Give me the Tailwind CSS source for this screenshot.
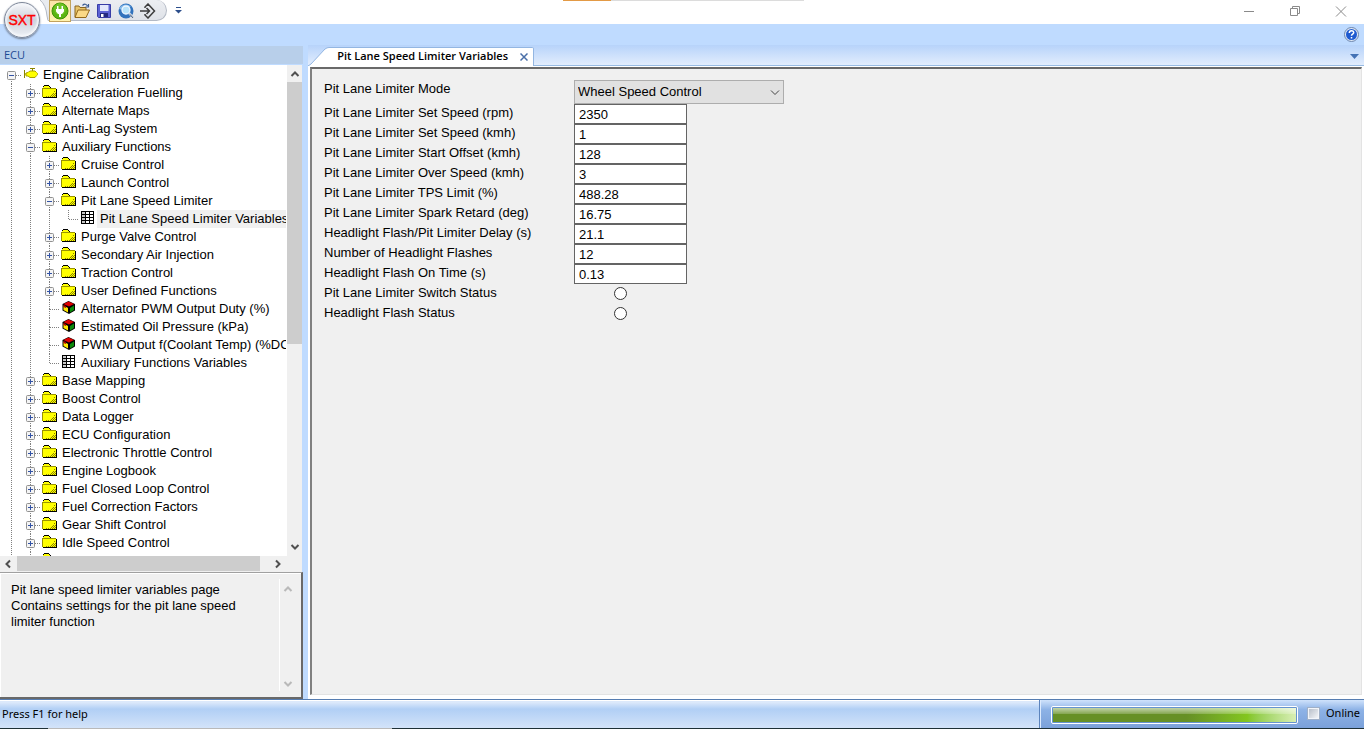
<!DOCTYPE html>
<html lang="en">
<head>
<meta charset="utf-8">
<title>SXT</title>
<script src="https://cdn.jsdelivr.net/npm/@tailwindcss/browser@4"></script>
</head>
<body class="h-screen overflow-hidden flex flex-col bg-[#bfdbff] text-black font-['Liberation_Sans',sans-serif] text-[13px]">

<!-- Shared symbols -->
<svg class="hidden" aria-hidden="true">
  <symbol id="folder" viewBox="0 0 16 14" shape-rendering="crispEdges">
    <path d="M2 0h5v1h1v1h1v1h5v1h1v9H1v-1H0V3h1V1h1z" fill="#000"/>
    <path d="M2 1h5v1h1v1H1V2h1z" fill="#ff0"/>
    <path d="M0 3h1v9H0zM1 3h13v1H1z" fill="#9a9400"/>
    <path d="M1 4h13v8H1z" fill="#ff0"/>
    <path d="M12 6h1v1h-1zM11 8h1v1h-1zM13 8h1v1h-1zM10 9h1v1h-1zM12 9h1v1h-1zM9 10h1v1H9zM11 10h1v1h-1zM13 10h1v1h-1zM4 11h1v1H4zM6 11h1v1H6zM8 11h1v1H8zM10 11h1v1h-1zM12 11h1v1h-1z" fill="#8a8500"/>
  </symbol>
  <symbol id="engine" viewBox="0 0 16 14">
    <path d="M1.500 3v8M2 7h3M7 1.500h5M9.500 2v2" stroke="#8a8500" fill="none"/>
    <path d="M5 5.500l2-1.500h5l2.500 2.500v1L12 10.500H7L5 9H3V6z" fill="#ff0" stroke="#a8a100"/>
    <path d="M5 7h9" stroke="#ff0" stroke-width="3"/>
  </symbol>
  <symbol id="table" viewBox="0 0 16 14" shape-rendering="crispEdges">
    <path d="M1 0h13v13H1z" fill="#000"/>
    <path d="M6 1h3v2H6zM10 1h3v2h-3zM6 4h3v2H6zM10 4h3v2h-3zM6 7h3v2H6zM10 7h3v2h-3zM6 10h3v2H6zM10 10h3v2h-3z" fill="#fff"/>
    <path d="M2 1h3v2H2zM2 4h3v2H2zM2 7h3v2H2zM2 10h3v2H2z" fill="#c8c8c8"/>
  </symbol>
  <symbol id="cube" viewBox="0 0 16 14">
    <path d="M7.500 0L14 3v6.500L8 13 1.500 9.500V3z" fill="#000"/>
    <path d="M7.500.500L13 3 8 5.500 2.500 3z" fill="#e00000"/>
    <path d="M2.500 4.500L7 7v4.500L2.500 9z" fill="#ffe800"/>
    <path d="M13 4.500L9 7v4.500L13 9z" fill="#0a8a0a"/>
    <path d="M2.500 4L5 5v2L2.500 6z" fill="#b00000"/>
  </symbol>
  <symbol id="chev-u" viewBox="0 0 10 10"><path d="M1.500 7L5 3.500 8.500 7" fill="none" stroke="currentColor" stroke-width="2"/></symbol>
  <symbol id="chev-d" viewBox="0 0 10 10"><path d="M1.500 3L5 6.500 8.500 3" fill="none" stroke="currentColor" stroke-width="2"/></symbol>
  <symbol id="chev-l" viewBox="0 0 10 10"><path d="M7 1.500L3.500 5 7 8.500" fill="none" stroke="currentColor" stroke-width="2"/></symbol>
  <symbol id="chev-r" viewBox="0 0 10 10"><path d="M3 1.500L6.500 5 3 8.500" fill="none" stroke="currentColor" stroke-width="2"/></symbol>
</svg>

<!-- Title bar -->
<header class="relative h-6 shrink-0 bg-white flex items-start">
  <button aria-label="SXT menu" class="absolute z-10 left-1 top-0.5 size-9 rounded-full border border-[#7d8799] bg-linear-to-b from-[#f6f7fa] via-[#ccd2dc] to-[#eef1f6] shadow-[0_1px_2px_#6b7688,inset_0_0_2px_2px_#f4f6fa] text-[#f00] text-sm leading-none [-webkit-text-stroke:0.4px_#f00]">SXT</button>
  <svg class="ml-10 w-2 h-[21px] shrink-0" viewBox="0 0 8 21"><path d="M0 0Q6 5 7 16L8 20.500V0z" fill="#e8ebf0"/><path d="M0 0Q6 5 7 16L8 20.500" fill="none" stroke="#b3b9c4"/></svg>
  <div class="h-[21px] w-[119px] rounded-r-full border border-l-0 border-t-0 border-[#b3b9c4] bg-linear-to-b from-[#eceef2] to-[#dfe2e8] flex items-start pl-px">
    <button aria-label="Connect" class="size-[22px] -mb-px shrink-0 flex items-center justify-center border border-[#c2a25c] bg-linear-to-b from-[#fbe3a8] to-[#fff3b0]">
      <svg class="size-[18px]" viewBox="0 0 18 18"><circle cx="9" cy="9" r="8" fill="#5bb512" stroke="#3f9207"/><circle cx="9" cy="7" r="6" fill="#7fd036" opacity=".5"/><path d="M6 4h1.500v3h3V4H12v3h1v2.500L11 12h-1v3H8v-3H7L5 9.500V7h1z" fill="#fff"/></svg>
    </button>
    <button aria-label="Open" class="w-[22px] h-[22px] shrink-0 flex items-center justify-center">
      <svg class="size-4" viewBox="0 0 16 16"><path d="M1 14V3h4l1 1.500h6V7" fill="#e8c468" stroke="#8a6520"/><path d="M1 14.500L4 7h11.500L12 14.500z" fill="#fbd987" stroke="#94691c"/><path d="M8.500 2.500c2-2 4-1.500 5 .5M14.500 1v3h-3" fill="none" stroke="#3b5b93" stroke-width="1.200"/></svg>
    </button>
    <button aria-label="Save" class="w-[22px] h-[22px] shrink-0 flex items-center justify-center">
      <svg class="size-4" viewBox="0 0 16 16"><path d="M1.500 1.500h13v13h-12l-1-1z" fill="#5c62d4" stroke="#383da6"/><path d="M4 2h8.500v6H4z" fill="#e3e8fb"/><path d="M4 10h8v4H4z" fill="#242a80"/><path d="M5 11h2.500v3H5z" fill="#fff"/></svg>
    </button>
    <button aria-label="Find" class="w-[22px] h-[22px] shrink-0 flex items-center justify-center">
      <svg class="size-4" viewBox="0 0 16 16"><circle cx="8" cy="8" r="7.500" fill="#3172bd"/><path d="M1 6c2-5 9-6 12-2-4 0-4 3-8 3z" fill="#83b9e8"/><circle cx="8" cy="7" r="4" fill="#b7e2fa" stroke="#eef6ff" stroke-width="1.300"/><path d="M11 10l4 4.500" stroke="#c9d4e2" stroke-width="2.500"/><path d="M12 11.500l3 3.500" stroke="#51637c"/></svg>
    </button>
    <button aria-label="Go online" class="w-[22px] h-[22px] shrink-0 flex items-center justify-center">
      <svg class="size-4" viewBox="0 0 16 16"><path d="M5 5V4l3-3 6.500 7L8 15l-3-3v-1M0 8h9M6.500 5l3 3-3 3" fill="none" stroke="#3c3c3c" stroke-width="1.500"/></svg>
    </button>
  </div>
  <button aria-label="Customize toolbar" class="ml-2 mt-1.5 size-2">
    <svg class="size-2" viewBox="0 0 8 8"><path d="M1 1.500h5" stroke="#2d4f8c"/><path d="M0 4h7L3.500 7.500z" fill="#2d4f8c"/></svg>
  </button>
  <div class="absolute left-[563px] top-0 flex h-px w-[241px]"><div class="w-12 bg-[#e39a45]"></div><div class="grow bg-[#dcdcdc]"></div></div>
  <div class="ml-auto h-6 flex items-center text-[#8a8a8a]">
    <button aria-label="Minimize" class="w-[46px] h-6 flex justify-center items-center"><svg class="size-3" viewBox="0 0 12 12"><path d="M1 5.500h10" stroke="currentColor"/></svg></button>
    <button aria-label="Restore" class="w-[46px] h-6 flex justify-center items-center"><svg class="size-3" viewBox="0 0 12 12"><path d="M1.500 2.500h7v7h-7zM3.500 2V.500h7v7H9" fill="none" stroke="currentColor"/></svg></button>
    <button aria-label="Close" class="w-[46px] h-6 flex justify-center items-center"><svg class="size-3" viewBox="0 0 12 12"><path d="M1 .500l10 10M11 .500L1 10.500" stroke="currentColor"/></svg></button>
  </div>
</header>

<!-- Ribbon strip -->
<div class="h-[21px] shrink-0 flex justify-end items-center pr-[5px]">
  <button aria-label="Help"><svg class="size-[15px]" viewBox="0 0 15 15"><circle cx="7.500" cy="7.500" r="7" fill="#dfe9f7" stroke="#6e86ad"/><circle cx="7.500" cy="7.500" r="5.500" fill="#1f5ad0"/><path d="M5.300 6c0-3 4.400-3 4.400-.4 0 1.600-2.200 1.600-2.200 3.100M7.500 10v1.600" fill="none" stroke="#fff" stroke-width="1.500"/></svg></button>
</div>

<!-- Workspace -->
<div class="grow min-h-0 flex">
  <aside class="w-[303px] shrink-0 flex flex-col pt-px">
    <h2 class="h-[18px] shrink-0 bg-[#b8cfea] pl-1 font-['Open_Sans',sans-serif] text-[11px] leading-[18px] text-[#1c4a94]">ECU</h2>
    <div class="grow min-h-0 mr-px mt-px flex flex-col bg-white">
      <div class="grow min-h-0 flex">
        <ul id="tree" role="tree" aria-label="ECU" class="grow min-w-0 overflow-hidden pl-0.5 pt-px mr-px"></ul>
        <div class="w-[15px] shrink-0 bg-[#f0f0f0] flex flex-col items-center justify-between text-[#505050]">
          <button aria-label="Scroll up" class="h-[17px] flex items-center"><svg class="size-2.5"><use href="#chev-u"/></svg></button>
          <div class="w-full h-[262px] bg-[#cdcdcd] mb-auto"></div>
          <button aria-label="Scroll down" class="h-[18px] flex items-center"><svg class="size-2.5"><use href="#chev-d"/></svg></button>
        </div>
      </div>
      <div class="h-4 shrink-0 bg-[#f0f0f0] flex items-center text-[#505050] pb-px">
        <button aria-label="Scroll left" class="w-[17px] pl-[3px]"><svg class="size-2.5"><use href="#chev-l"/></svg></button>
        <div class="h-full w-[243px] bg-[#cdcdcd]"></div>
        <button aria-label="Scroll right" class="ml-auto mr-[19px]"><svg class="size-2.5"><use href="#chev-r"/></svg></button>
      </div>
    </div>
    <div class="h-[127px] shrink-0 flex border-t border-[#a0a0a0] border-r-2 border-b-2 border-r-[#696969] border-b-[#696969] bg-[#f0f0f0] shadow-[inset_1px_1px_#fff]">
      <p class="grow pl-[11px] pt-[9px] pr-4 leading-4">Pit lane speed limiter variables page<br>Contains settings for the pit lane speed<br>limiter function</p>
      <div class="w-[22px] shrink-0 my-1.5 border-l border-white flex flex-col justify-between text-[#b9b9b9] pl-[3px] pt-[5px] pb-0.5">
        <button aria-label="Scroll up"><svg class="size-2.5"><use href="#chev-u"/></svg></button>
        <button aria-label="Scroll down"><svg class="size-2.5"><use href="#chev-d"/></svg></button>
      </div>
    </div>
  </aside>

  <main class="grow min-w-0 ml-[5px] flex flex-col">
    <div class="h-[21px] shrink-0 relative flex bg-linear-to-b from-[#b7d3fa] to-[#e2edfd] border-b border-[#98bbe3]">
      <svg class="absolute left-0 top-0.5 w-[226px] h-[19px]" viewBox="0 0 226 19"><path d="M0 19L3 17 17 2Q19 .5 21 .5H224.500Q225.500.5 225.500 2V19" fill="#fff" stroke="#93b6e2"/></svg>
      <div class="relative w-[226px] flex items-center justify-end pt-0.5 pr-1.5">
        <h1 class="font-['Open_Sans',sans-serif] font-semibold text-[11px] leading-4 whitespace-nowrap">Pit Lane Speed Limiter Variables</h1>
        <button aria-label="Close tab" class="ml-3 mt-0.5"><svg class="size-2" viewBox="0 0 8 8"><path d="M.5.500l7 7M7.500.500l-7 7" stroke="#4a6fa8" stroke-width="1.500"/></svg></button>
      </div>
      <button aria-label="Tab list" class="ml-auto mr-[5px] mt-0.5 self-center"><svg class="w-[9px] h-[5px]" viewBox="0 0 9 5"><path d="M0 0h9L4.500 5z" fill="#4472b5"/></svg></button>
    </div>
    <div class="grow min-h-0 bg-white pl-0.5 pt-px pr-0.5 pb-1 flex">
      <form class="grow border-2 border-t-[#696969] border-l-[#808080] border-r-[#e3e3e3] border-b-[#e3e3e3] border-r border-b bg-[#f0f0f0] pl-3 pt-[11px]" onsubmit="return false">
        <div class="flex items-start h-6">
          <label for="mode" class="w-[250px] leading-[18px]">Pit Lane Limiter Mode</label>
          <div class="relative">
            <select id="mode" class="block appearance-none w-[210px] h-6 border border-[#adadad] bg-[#e1e1e1] pl-[3px]"><option>Wheel Speed Control</option></select>
            <svg class="absolute right-1 top-[7px] size-2.5 pointer-events-none" viewBox="0 0 10 10"><path d="M1 3.500l4 4 4-4" fill="none" stroke="#444"/></svg>
          </div>
        </div>
        <div id="fields"></div>
      </form>
    </div>
  </main>
</div>

<!-- Status bar -->
<footer class="h-[30px] shrink-0 flex flex-col border-t border-[#567db1] font-['Noto_Sans',sans-serif] text-[11px]">
  <div class="grow flex">
    <div class="grow flex items-center pl-0.5 bg-linear-to-b from-[#dce9fb] from-5% via-[#b1cff5] via-30% to-[#d3e3f9] border-t border-white">Press F1 for help</div>
    <div class="w-[325px] shrink-0 flex items-center pl-[11px] pt-0.5 border-l border-[#5c84bd] shadow-[inset_1px_0_#dceafd] bg-linear-to-b from-[#cfe2fb] via-[#8db2e6] via-35% to-[#7ba1da]">
      <div role="progressbar" aria-label="Activity" class="w-[247px] h-[18px] rounded-xs border border-white bg-[#6593cf] p-px">
        <div class="h-full bg-[#669026] relative">
          <div class="absolute inset-0 bg-linear-to-r from-[#669026] from-55% via-[#83c61f] via-80% to-[#d9efb4]"></div>
          <div class="absolute inset-x-0 top-0 h-1.5 bg-linear-to-b from-white/60 to-white/20"></div>
        </div>
      </div>
      <label class="ml-[10px] flex items-center gap-[7px] -mt-[3px]"><input type="checkbox" class="appearance-none size-[11px] border border-[#f2f5fa] bg-linear-to-br from-[#b8bfca] to-[#f4f6f8] outline outline-[#9fb0c8]">Online</label>
    </div>
  </div>
  <div class="h-px flex bg-[#1e3036]"><div class="w-12"></div><div class="w-[344px] bg-[#b9b9b9]"></div></div>
</footer>

<script>
  // [depth, icon, state (+, -, or leaf), label]
  const items = [
    [0,'engine','-','Engine Calibration'],[1,'folder','+','Acceleration Fuelling'],[1,'folder','+','Alternate Maps'],
    [1,'folder','+','Anti-Lag System'],[1,'folder','-','Auxiliary Functions'],[2,'folder','+','Cruise Control'],
    [2,'folder','+','Launch Control'],[2,'folder','-','Pit Lane Speed Limiter'],[3,'table','','Pit Lane Speed Limiter Variables'],
    [2,'folder','+','Purge Valve Control'],[2,'folder','+','Secondary Air Injection'],[2,'folder','+','Traction Control'],
    [2,'folder','+','User Defined Functions'],[2,'cube','','Alternator PWM Output Duty (%)'],[2,'cube','','Estimated Oil Pressure (kPa)'],
    [2,'cube','','PWM Output f(Coolant Temp) (%DC)'],[2,'table','','Auxiliary Functions Variables'],[1,'folder','+','Base Mapping'],
    [1,'folder','+','Boost Control'],[1,'folder','+','Data Logger'],[1,'folder','+','ECU Configuration'],
    [1,'folder','+','Electronic Throttle Control'],[1,'folder','+','Engine Logbook'],[1,'folder','+','Fuel Closed Loop Control'],
    [1,'folder','+','Fuel Correction Factors'],[1,'folder','+','Gear Shift Control'],[1,'folder','+','Idle Speed Control'],
    [1,'folder','+','']
  ];
  const hasNext = (i, d) => {
    for (let k = i + 1; k < items.length; k++) {
      if (items[k][0] < d) return false;
      if (items[k][0] === d) return true;
    }
    return d < 2;
  };
  const line = p => `<path d="${p}" stroke="#808080" stroke-dasharray="1 1" fill="none"/>`;
  document.getElementById('tree').innerHTML = items.map(([depth, icon, state, label], i) => {
    let cols = '';
    for (let d = 0; d < depth; d++)
      cols += `<svg class="w-[19px] h-[18px] shrink-0" viewBox="0 0 19 18">${hasNext(i, d) ? line('M9.500 0v18') : ''}</svg>`;
    const own = line('M10 9.500h9') + (i ? line('M9.500 0v9') : '') + (hasNext(i, depth) ? line('M9.500 9v9') : '');
    const box = state ? `<rect x="5.500" y="5.500" width="8" height="8" rx="1" fill="#f4f4f4" stroke="#919191"/><path d="M7 9.500h5${state === '+' ? 'M9.500 7v5' : ''}" stroke="#3353a5"/>` : '';
    const guide = `<svg class="w-[19px] h-[18px] block" viewBox="0 0 19 18">${own}${box}</svg>`;
    cols += state ? `<button aria-label="Toggle ${label}" class="shrink-0">${guide}</button>` : `<div class="shrink-0">${guide}</div>`;
    return `<li role="treeitem" aria-level="${depth + 1}" class="flex h-[18px] whitespace-nowrap">${cols}
      <svg class="w-4 h-3.5 ml-0.5 mt-px shrink-0"><use href="#${icon}"/></svg>
      <span class="ml-px pl-[3px] pr-0.5 leading-[18px] ${label === 'Pit Lane Speed Limiter Variables' ? 'bg-[#f0f0f0]' : ''}">${label}</span></li>`;
  }).join('');

  const fields = [
    ['Pit Lane Limiter Set Speed (rpm)','2350'],['Pit Lane Limiter Set Speed (kmh)','1'],['Pit Lane Limiter Start Offset (kmh)','128'],
    ['Pit Lane Limiter Over Speed (kmh)','3'],['Pit Lane Limiter TPS Limit (%)','488.28'],['Pit Lane Limiter Spark Retard (deg)','16.75'],
    ['Headlight Flash/Pit Limiter Delay (s)','21.1'],['Number of Headlight Flashes','12'],['Headlight Flash On Time (s)','0.13'],
    ['Pit Lane Limiter Switch Status'],['Headlight Flash Status']
  ];
  document.getElementById('fields').innerHTML = fields.map(([label, value], i) => `
    <div class="flex items-start h-5">
      <label for="f${i}" class="w-[250px] leading-[18px]">${label}</label>
      ${value ? `<input id="f${i}" type="text" value="${value}" class="w-[113px] h-5 border border-[#646464] bg-white pl-1">`
              : `<input id="f${i}" type="radio" class="appearance-none size-[13px] ml-10 mt-[3px] rounded-full border border-[#333] bg-white">`}
    </div>`).join('');
</script>
</body>
</html>
